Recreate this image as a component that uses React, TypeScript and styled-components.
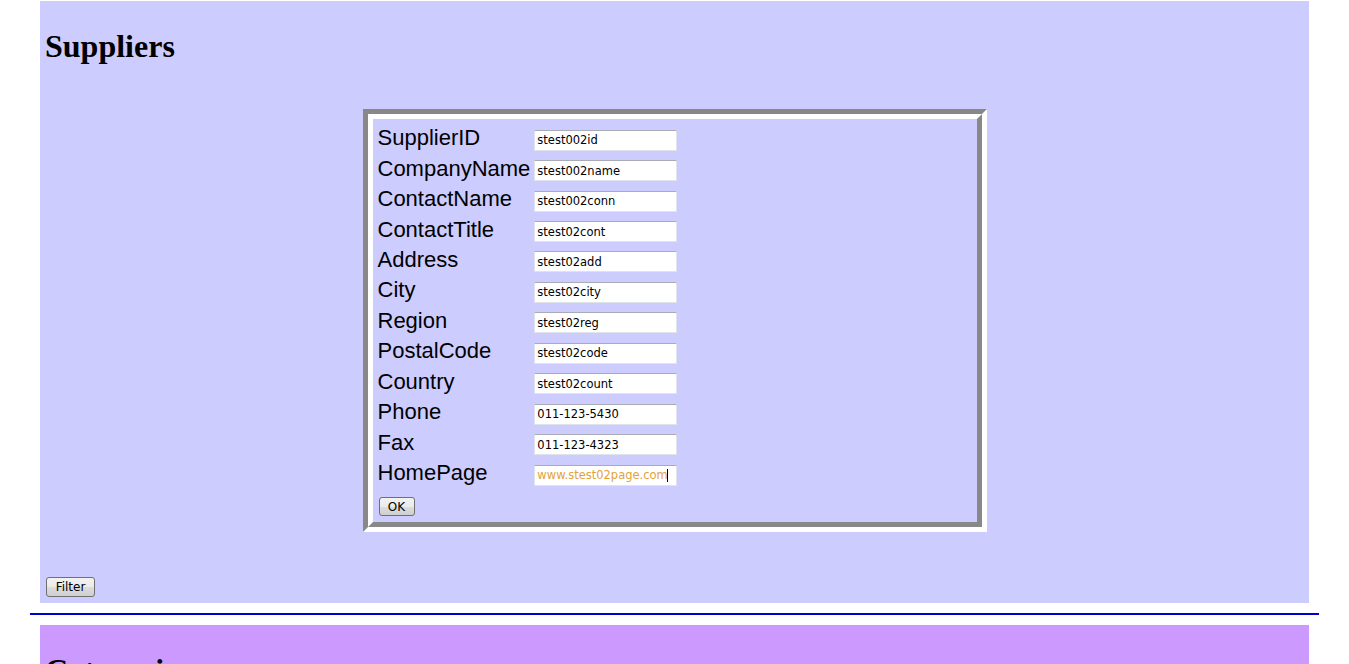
import React from "react";
import styled, { createGlobalStyle } from "styled-components";

const GlobalStyle = createGlobalStyle`
  html, body { margin: 0; padding: 0; background: #ffffff; }
  body { font-family: "Liberation Serif", "Times New Roman", serif; color: #000; }
`;

const Page = styled.div`
  padding: 1px 30px 0;
`;

const Panel = styled.section<{ $bg: string }>`
  margin: 0 10px;
  padding: 0 6px 6px;
  background: ${(p) => p.$bg};
  overflow: hidden;
`;

const Title = styled.h1`
  margin: 27.2px 0 0 -1px;
  font-family: "Liberation Serif", "Times New Roman", serif;
  font-size: 32px;
  font-weight: bold;
  line-height: 36px;
`;

const Frame = styled.div`
  width: 624px;
  box-sizing: border-box;
  margin: 44.8px auto 0;
  border: 5px solid;
  border-color: #888888 #ffffff #ffffff #888888;
`;

const FrameInner = styled.div`
  border: 5px solid;
  border-color: #ffffff #888888 #888888 #ffffff;
  padding: 6px 4px 6px 5px;
`;

const FieldGrid = styled.div`
  display: grid;
  grid-template-columns: max-content 143px;
  column-gap: 4px;
  grid-auto-rows: 30.45px;
  align-items: center;
`;

const Label = styled.label`
  font-family: "Liberation Sans", Arial, sans-serif;
  font-size: 22px;
  line-height: 25px;
  padding-bottom: 5px;
  white-space: nowrap;
`;

const FieldWrap = styled.span`
  position: relative;
  display: block;
  width: 143px;
  height: 21px;
`;

const TextInput = styled.input<{ $accent?: boolean }>`
  display: block;
  width: 143px;
  height: 21px;
  box-sizing: border-box;
  margin: 0;
  padding: 0 2px;
  border: 1px solid #dfe3ea;
  border-top-color: #a9acb4;
  background: #ffffff;
  font-family: "DejaVu Sans", Tahoma, Verdana, sans-serif;
  font-size: 11.5px;
  color: ${(p) => (p.$accent ? "#e3a23a" : "#000000")};
  outline: none;
`;

const Caret = styled.span`
  position: absolute;
  left: 133px;
  top: 4px;
  width: 1px;
  height: 13px;
  background: #000000;
`;

const Button = styled.button<{ $w: number; $h: number }>`
  width: ${(p) => p.$w}px;
  height: ${(p) => p.$h}px;
  box-sizing: border-box;
  margin: 0;
  padding: 0;
  border: 1px solid #707070;
  border-radius: 3px;
  background: linear-gradient(#f2f2f2 0%, #ebebeb 50%, #dddddd 51%, #cfcfcf 100%);
  font-family: "DejaVu Sans", Tahoma, Verdana, sans-serif;
  font-size: 12px;
  color: #000;
  line-height: 1;
`;

const OkRow = styled.div`
  margin: 6.3px 0 0 1px;
  height: 19px;
`;

const FilterRow = styled.div`
  margin-top: 45px;
  height: 20px;
`;

const Divider = styled.hr`
  height: 2px;
  margin: 10px 0;
  border: none;
  background: #0000cc;
`;

const fields: [string, string][] = [
  ["SupplierID", "stest002id"],
  ["CompanyName", "stest002name"],
  ["ContactName", "stest002conn"],
  ["ContactTitle", "stest02cont"],
  ["Address", "stest02add"],
  ["City", "stest02city"],
  ["Region", "stest02reg"],
  ["PostalCode", "stest02code"],
  ["Country", "stest02count"],
  ["Phone", "011-123-5430"],
  ["Fax", "011-123-4323"],
  ["HomePage", "www.stest02page.com"],
];

export default function App() {
  return (
    <>
      <GlobalStyle />
      <Page>
        <Panel $bg="#ccccff">
          <Title>Suppliers</Title>
          <Frame>
            <FrameInner>
              <FieldGrid>
                {fields.map(([label, value]) => {
                  const isHome = label === "HomePage";
                  return (
                    <React.Fragment key={label}>
                      <Label>{label}</Label>
                      <FieldWrap>
                        <TextInput defaultValue={value} $accent={isHome} readOnly />
                        {isHome && <Caret />}
                      </FieldWrap>
                    </React.Fragment>
                  );
                })}
              </FieldGrid>
              <OkRow>
                <Button $w={36} $h={19}>OK</Button>
              </OkRow>
            </FrameInner>
          </Frame>
          <FilterRow>
            <Button $w={49} $h={20}>Filter</Button>
          </FilterRow>
        </Panel>
        <Divider />
        <Panel $bg="#cc99ff">
          <Title>Categories</Title>
        </Panel>
      </Page>
    </>
  );
}
